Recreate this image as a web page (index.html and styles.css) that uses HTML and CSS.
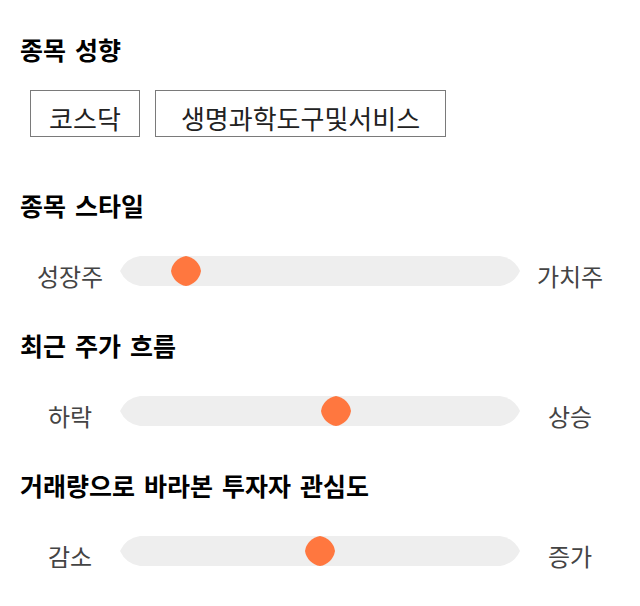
FILE: index.html
```html
<!DOCTYPE html>
<html lang="ko">
<head>
<meta charset="utf-8">
<link rel="stylesheet" href="styles.css">
</head>
<body>
<section class="section section-tags">
  <h2 class="title">종목 성향</h2>
  <div class="tags">
    <span class="tag tag-short">코스닥</span>
    <span class="tag tag-long">생명과학도구및서비스</span>
  </div>
</section>

<section class="section">
  <h2 class="title">종목 스타일</h2>
  <div class="slider">
    <span class="label">성장주</span>
    <div class="track">
      <svg class="track-bg" width="400" height="30" viewBox="0 0 400 30"><path d="M20 0H380A26 26 0 0 1 400 15A26 26 0 0 1 380 30H20A26 26 0 0 1 0 15A26 26 0 0 1 20 0Z" fill="#eeeeee"/></svg>
      <svg class="thumb" style="left:16.4%" width="30" height="30" viewBox="0 0 30 30"><path d="M15 0A18 18 0 0 1 30 15A18 18 0 0 1 15 30A18 18 0 0 1 0 15A18 18 0 0 1 15 0Z" fill="#ff773f"/></svg>
    </div>
    <span class="label">가치주</span>
  </div>
</section>

<section class="section">
  <h2 class="title">최근 주가 흐름</h2>
  <div class="slider">
    <span class="label">하락</span>
    <div class="track">
      <svg class="track-bg" width="400" height="30" viewBox="0 0 400 30"><path d="M20 0H380A26 26 0 0 1 400 15A26 26 0 0 1 380 30H20A26 26 0 0 1 0 15A26 26 0 0 1 20 0Z" fill="#eeeeee"/></svg>
      <svg class="thumb" style="left:54%" width="30" height="30" viewBox="0 0 30 30"><path d="M15 0A18 18 0 0 1 30 15A18 18 0 0 1 15 30A18 18 0 0 1 0 15A18 18 0 0 1 15 0Z" fill="#ff773f"/></svg>
    </div>
    <span class="label">상승</span>
  </div>
</section>

<section class="section">
  <h2 class="title">거래량으로 바라본 투자자 관심도</h2>
  <div class="slider">
    <span class="label">감소</span>
    <div class="track">
      <svg class="track-bg" width="400" height="30" viewBox="0 0 400 30"><path d="M20 0H380A26 26 0 0 1 400 15A26 26 0 0 1 380 30H20A26 26 0 0 1 0 15A26 26 0 0 1 20 0Z" fill="#eeeeee"/></svg>
      <svg class="thumb" style="left:50.1%" width="30" height="30" viewBox="0 0 30 30"><path d="M15 0A18 18 0 0 1 30 15A18 18 0 0 1 15 30A18 18 0 0 1 0 15A18 18 0 0 1 15 0Z" fill="#ff773f"/></svg>
    </div>
    <span class="label">증가</span>
  </div>
</section>
</body>
</html>
```
FILE: styles.css
```css
html, body {
  margin: 0;
  padding: 0;
  background: #ffffff;
}

body {
  padding: 34px 20px 0 20px;
  font-family: "Noto Sans CJK KR", "Noto Sans", sans-serif;
  color: #000000;
}

.section {
  margin-bottom: 44px;
}

.section-tags {
  margin-bottom: 53px;
}

.title {
  margin: 0;
  font-size: 25px;
  font-weight: 700;
  line-height: 30px;
  word-spacing: 2px;
  color: #000000;
}

.tags {
  display: flex;
  gap: 15px;
  margin: 26px 0 0 10px;
}

.tag {
  display: inline-flex;
  align-items: center;
  justify-content: center;
  height: 37px;
  padding-top: 8px;
  border: 1px solid #7a7a7a;
  font-size: 26px;
  line-height: 30px;
  color: #222222;
  box-sizing: content-box;
}

.tag-short {
  width: 108px;
}

.tag-long {
  width: 289px;
}

.slider {
  display: grid;
  grid-template-columns: 100px 400px 100px;
  align-items: start;
  margin-top: 36px;
  height: 30px;
}

.label {
  text-align: center;
  font-size: 24px;
  color: #444444;
  line-height: 30px;
  padding-top: 5px;
}

.track {
  position: relative;
  width: 400px;
  height: 30px;
}

.track-bg {
  display: block;
}

.thumb {
  position: absolute;
  top: 0;
  margin-left: -15px;
}
```
